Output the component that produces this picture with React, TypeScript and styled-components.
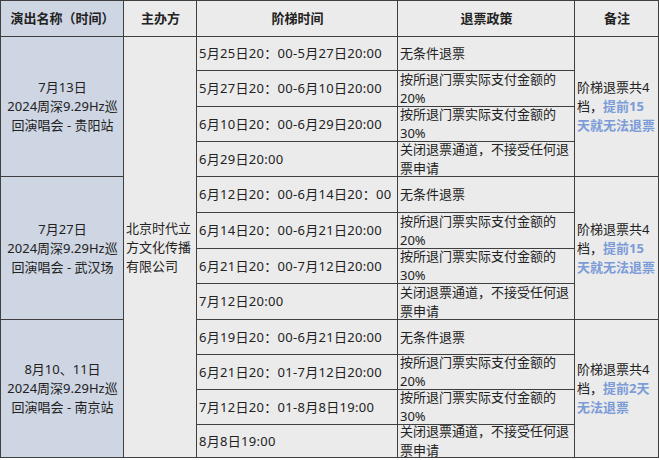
import React from "react";
import styled, { createGlobalStyle } from "styled-components";

const Global = createGlobalStyle`
  html, body { margin: 0; padding: 0; background: #ffffff; }
  body { font-family: "Noto Sans", "Noto Sans CJK SC", sans-serif; }
`;

const Table = styled.div`
  display: grid;
  grid-template-columns: 122px 72px 200px 176px 83px;
  grid-template-rows: 35px 33px 35px 34px 34px 35px 35px 34px 35px 34px 34px 34px 32px;
  gap: 1px;
  padding: 1px;
  width: max-content;
  background: #3f3f3f;
  font-size: 13px;
  line-height: 19px;
  color: #222;
`;

const Cell = styled.div<{ $rows?: number; $blue?: boolean; $center?: boolean }>`
  grid-row: span ${(p) => p.$rows ?? 1};
  background: ${(p) => (p.$blue ? "#ced5e3" : "#ebebeb")};
  display: flex;
  align-items: center;
  justify-content: ${(p) => (p.$center ? "center" : "flex-start")};
  text-align: ${(p) => (p.$center ? "center" : "left")};
  padding: 0 1px 0 2px;
  overflow: hidden;
  min-width: 0;
`;

const HeaderCell = styled(Cell)`
  font-weight: 700;
  justify-content: center;
  text-align: center;
`;

const TimeCell = styled(Cell)`
  letter-spacing: 0.3px;
`;

const NoteCell = styled(Cell)`
  padding: 0 3px 0 2px;
`;

const Text = styled.span`
  display: block;
`;

const Highlight = styled.b`
  color: #7c9cd8;
  font-weight: 700;
`;

type Group = {
  event: string[];
  rows: [string, string][];
  note: React.ReactNode;
};

const policies = [
  "无条件退票",
  "按所退门票实际支付金额的20%",
  "按所退门票实际支付金额的30%",
  "关闭退票通道，不接受任何退票申请",
];

const groups: Group[] = [
  {
    event: ["7月13日", "2024周深9.29Hz巡回演唱会 - 贵阳站"],
    rows: [
      ["5月25日20：00-5月27日20:00", policies[0]],
      ["5月27日20：00-6月10日20:00", policies[1]],
      ["6月10日20：00-6月29日20:00", policies[2]],
      ["6月29日20:00", policies[3]],
    ],
    note: (
      <>
        阶梯退票共4档，<Highlight>提前15天就无法退票</Highlight>
      </>
    ),
  },
  {
    event: ["7月27日", "2024周深9.29Hz巡回演唱会 - 武汉场"],
    rows: [
      ["6月12日20：00-6月14日20：00", policies[0]],
      ["6月14日20：00-6月21日20:00", policies[1]],
      ["6月21日20：00-7月12日20:00", policies[2]],
      ["7月12日20:00", policies[3]],
    ],
    note: (
      <>
        阶梯退票共4档，<Highlight>提前15天就无法退票</Highlight>
      </>
    ),
  },
  {
    event: ["8月10、11日", "2024周深9.29Hz巡回演唱会 - 南京站"],
    rows: [
      ["6月19日20：00-6月21日20:00", policies[0]],
      ["6月21日20：01-7月12日20:00", policies[1]],
      ["7月12日20：01-8月8日19:00", policies[2]],
      ["8月8日19:00", policies[3]],
    ],
    note: (
      <>
        阶梯退票共4档，<Highlight>提前2天无法退票</Highlight>
      </>
    ),
  },
];

export default function App() {
  return (
    <>
      <Global />
      <Table>
        <HeaderCell $blue>演出名称（时间）</HeaderCell>
        <HeaderCell>主办方</HeaderCell>
        <HeaderCell>阶梯时间</HeaderCell>
        <HeaderCell>退票政策</HeaderCell>
        <HeaderCell>备注</HeaderCell>
        {groups.map((g, gi) => (
          <React.Fragment key={gi}>
            <Cell $rows={4} $blue $center>
              <Text>
                {g.event[0]}
                <br />
                {g.event[1]}
              </Text>
            </Cell>
            {gi === 0 && (
              <Cell $rows={12}>
                <Text>北京时代立方文化传播有限公司</Text>
              </Cell>
            )}
            <TimeCell>
              <Text>{g.rows[0][0]}</Text>
            </TimeCell>
            <Cell>
              <Text>{g.rows[0][1]}</Text>
            </Cell>
            <NoteCell $rows={4}>
              <Text>{g.note}</Text>
            </NoteCell>
            {g.rows.slice(1).map((r, ri) => (
              <React.Fragment key={ri}>
                <TimeCell>
                  <Text>{r[0]}</Text>
                </TimeCell>
                <Cell>
                  <Text>{r[1]}</Text>
                </Cell>
              </React.Fragment>
            ))}
          </React.Fragment>
        ))}
      </Table>
    </>
  );
}
